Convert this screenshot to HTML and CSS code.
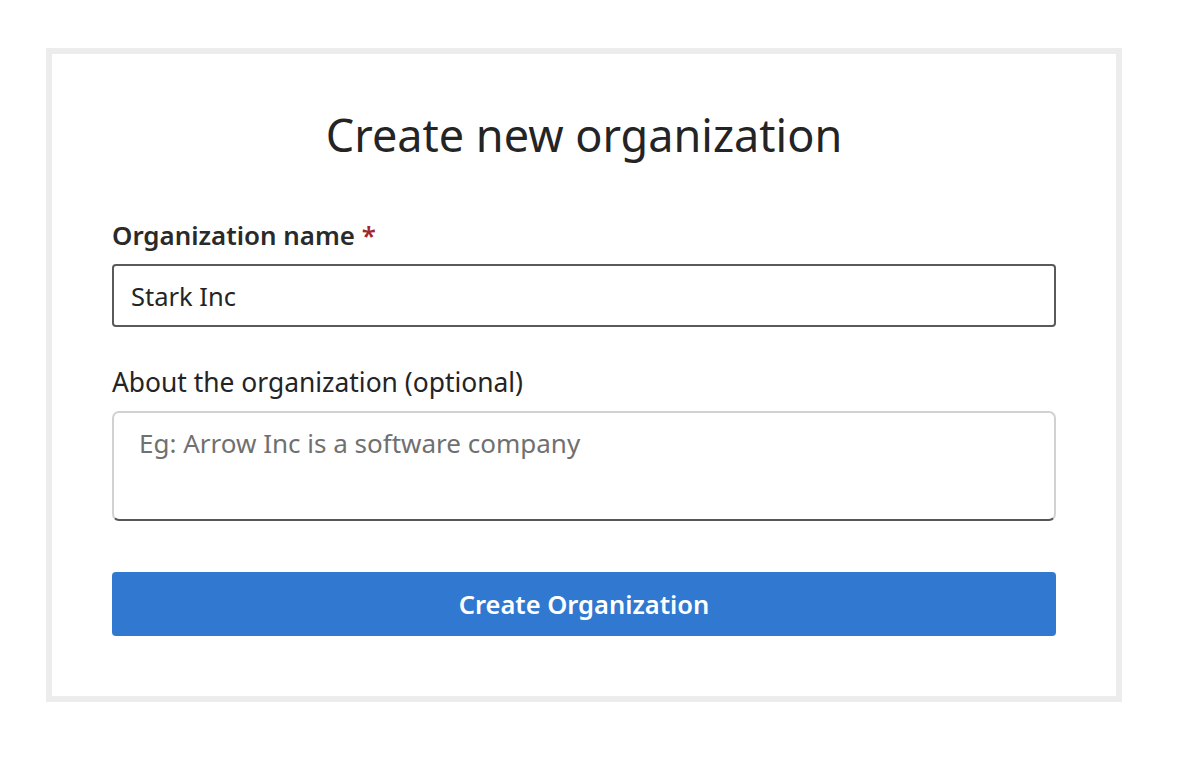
FILE: index.html
```html
<!DOCTYPE html>
<html>
<head>
<meta charset="utf-8">
<link rel="stylesheet" href="styles.css">
</head>
<body>
<div class="card">
  <h1 class="title">Create new organization</h1>
  <form class="form">
    <div class="field">
      <label class="label label-strong">Organization name <span class="req">*</span></label>
      <input class="input" type="text" value="Stark Inc">
    </div>
    <div class="field">
      <label class="label">About the organization (optional)</label>
      <textarea class="textarea" placeholder="Eg: Arrow Inc is a software company"></textarea>
    </div>
    <button class="btn" type="button">Create Organization</button>
  </form>
</div>
</body>
</html>
```
FILE: styles.css
```css
* { box-sizing: border-box; }
html, body { margin: 0; background: #fff; }
body {
  padding: 48px 0 0 46px;
  font-family: "Noto Sans", "Open Sans", sans-serif;
  color: #242424;
}
.card {
  width: 1076px;
  height: 654px;
  border: 6px solid #ececec;
  padding: 49px 60px 0 60px;
  background: #fff;
}
.title {
  margin: 0;
  text-align: center;
  font-size: 45px;
  font-weight: 400;
  line-height: 64px;
  color: #242424;
}
.form {
  margin-top: 52px;
  display: flex;
  flex-direction: column;
}
.field { display: flex; flex-direction: column; margin-bottom: 39px; }
.label {
  font-size: 26.4px;
  line-height: 32px;
  margin-bottom: 13px;
  color: #242424;
}
.label-strong { font-weight: 600; font-size: 25.9px; color: #2a2a2a; }
.req { color: #a4262c; }
.input {
  height: 63px;
  border: 2px solid #5a5a5a;
  border-radius: 4px;
  padding: 0 17px;
  font-family: inherit;
  font-size: 25.5px;
  color: #242424;
  outline: none;
}
.textarea {
  height: 110px;
  border: 2px solid #d1d1d1;
  border-bottom-color: #575757;
  border-radius: 7px;
  padding: 12px 25px;
  font-family: inherit;
  font-size: 26px;
  color: #242424;
  resize: none;
  outline: none;
}
.textarea::placeholder { color: #707070; }
.btn {
  height: 64px;
  border: none;
  border-radius: 4px;
  background: #3178d0;
  color: #fff;
  font-family: inherit;
  font-size: 25.5px;
  font-weight: 600;
  cursor: pointer;
  margin-top: 12px;
}
```
